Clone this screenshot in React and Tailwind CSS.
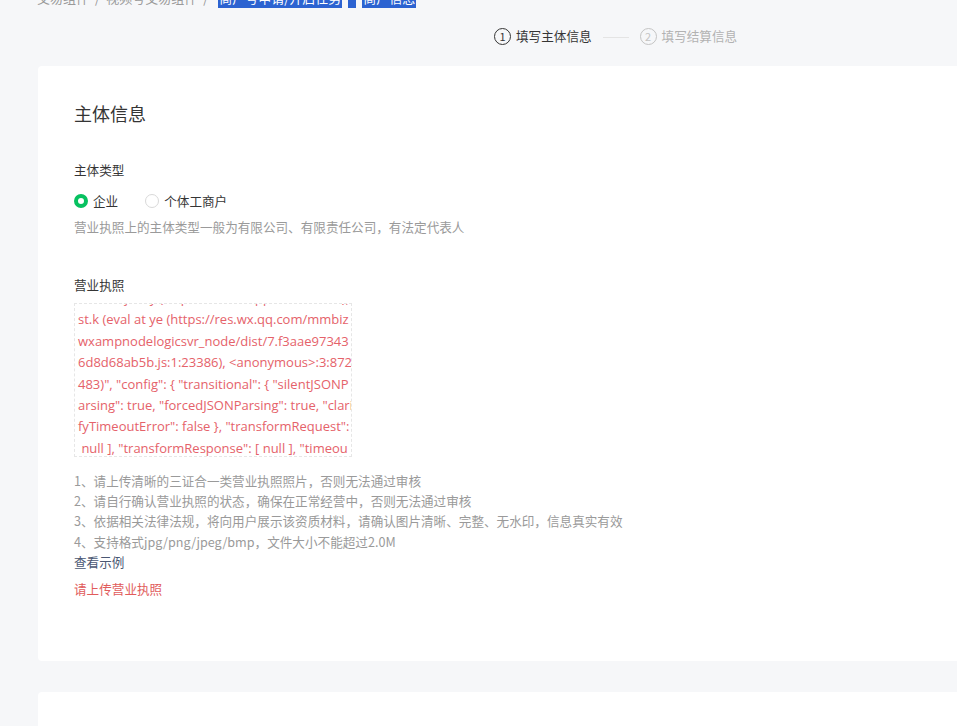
import React from "react";

const errorLines = [
  "    at Object.y (https://res.wx.qq.com/mmbiz), p.p (",
  "st.k (eval at ye (https://res.wx.qq.com/mmbiz",
  "wxampnodelogicsvr_node/dist/7.f3aae97343",
  "6d8d68ab5b.js:1:23386), <anonymous>:3:872",
  '483)", "config": { "transitional": { "silentJSONP',
  'arsing": true, "forcedJSONParsing": true, "clari',
  'fyTimeoutError": false }, "transformRequest": [',
  ' null ], "transformResponse": [ null ], "timeou',
];

const tips = [
  "1、请上传清晰的三证合一类营业执照照片，否则无法通过审核",
  "2、请自行确认营业执照的状态，确保在正常经营中，否则无法通过审核",
  "3、依据相关法律法规，将向用户展示该资质材料，请确认图片清晰、完整、无水印，信息真实有效",
  "4、支持格式jpg/png/jpeg/bmp，文件大小不能超过2.0M",
];

const Radio = ({ checked, label }) => (
  <label className="flex items-center gap-[5px] cursor-pointer">
    {checked ? (
      <span className="w-[14px] h-[14px] rounded-full border-[4px] border-[#07c160] bg-white" />
    ) : (
      <span className="w-[14px] h-[14px] rounded-full border border-[#d9d9d9] bg-white" />
    )}
    <span className="text-[12.6px] text-[#353535]">{label}</span>
  </label>
);

const StepNum = ({ n, active }) => (
  <span
    className={`w-[17px] h-[17px] rounded-full border flex items-center justify-center text-[11px] leading-none ${
      active ? "border-[#353535] text-[#353535]" : "border-[#c4c4c4] text-[#c4c4c4]"
    }`}
  >
    {n}
  </span>
);

export default function App() {
  return (
    <div
      className="min-h-[726px] bg-[#f6f7f9] overflow-hidden"
      style={{ fontFamily: '"Noto Sans CJK SC", "Noto Sans", sans-serif' }}
    >
      {/* Breadcrumb (scrolled mostly out of view) */}
      <div className="h-[8px] overflow-hidden relative">
        <div className="absolute left-[37px] top-[-12px] flex items-center text-[13px] leading-[20px] text-[#9a9a9a] whitespace-nowrap">
          <span>交易组件</span>
          <span className="mx-[6px]">/</span>
          <span>视频号交易组件</span>
          <span className="mx-[6px]">/</span>
          <span className="bg-[#2c63d1] text-white px-[1px] ml-[4px]">商户号申请/开启任务</span>
          <span className="bg-[#2c63d1] w-[8px] h-[20px] mx-[6px]" />
          <span className="bg-[#2c63d1] text-white px-[1px]">商户信息</span>
        </div>
      </div>

      {/* Steps */}
      <div className="h-[58px] flex items-start pl-[494px] pt-[19px]">
        <div className="flex items-center gap-[5px]">
          <StepNum n="1" active />
          <span className="text-[12.6px] text-[#353535]">填写主体信息</span>
        </div>
        <div className="w-[26px] h-px bg-[#e4e4e4] mx-[11px] mt-[10px]" />
        <div className="flex items-center gap-[5px]">
          <StepNum n="2" />
          <span className="text-[12.6px] text-[#b2b2b2]">填写结算信息</span>
        </div>
      </div>

      {/* Main card */}
      <div className="ml-[38px] bg-white rounded-l-[4px] h-[595px] pl-[36px] pt-[34px]">
        <h2 className="text-[18px] leading-[26px] text-[#353535] font-normal">主体信息</h2>

        <div className="mt-[34px] text-[12.6px] leading-[20px] text-[#353535]">主体类型</div>
        <div className="mt-[12px] flex items-center gap-[27px]">
          <Radio checked label="企业" />
          <Radio label="个体工商户" />
        </div>
        <div className="mt-[6px] text-[12.6px] leading-[20px] text-[#9a9a9a]">
          营业执照上的主体类型一般为有限公司、有限责任公司，有法定代表人
        </div>

        <div className="mt-[38px] text-[12.6px] leading-[20px] text-[#353535]">营业执照</div>
        <div className="mt-[8px] w-[278px] h-[154px] border border-dashed border-[#e6e6e6] overflow-hidden">
          <div
            className="mt-[-16px] pl-[3px] text-[13px] leading-[21.4px] text-[#e5626a] whitespace-pre"
            style={{ fontFamily: '"Open Sans", "Liberation Sans", sans-serif' }}
          >
            {errorLines.map((l, i) => (
              <div key={i}>{l}</div>
            ))}
          </div>
        </div>

        <div className="mt-[14px] text-[12.6px] leading-[20.3px] text-[#9a9a9a]">
          {tips.map((t) => (
            <div key={t}>{t}</div>
          ))}
        </div>
        <div className="text-[12.6px] leading-[20px] text-[#4a5773] cursor-pointer">查看示例</div>
        <div className="mt-[7px] text-[12.6px] leading-[20px] text-[#e15b5b]">请上传营业执照</div>
      </div>

      {/* Next card */}
      <div className="mt-[31px] ml-[38px] bg-white rounded-tl-[4px] h-[40px]" />
    </div>
  );
}
